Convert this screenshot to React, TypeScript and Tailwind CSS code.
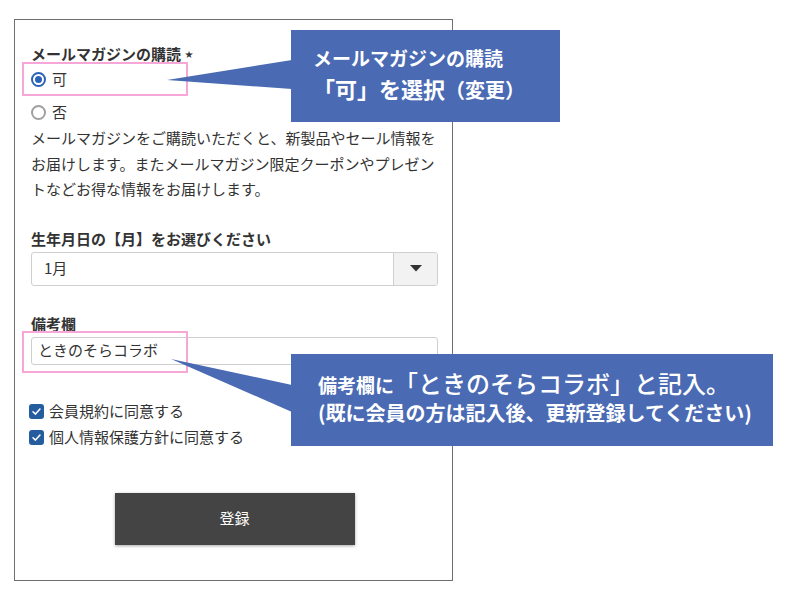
import React from "react";

const font = { fontFamily: '"Noto Sans CJK JP", "Noto Sans", sans-serif' };

function Radio({ checked, label }: { checked?: boolean; label: string }) {
  return (
    <div className="flex items-center h-[20px] gap-[6px]">
      {checked ? (
        <span className="w-[15px] h-[15px] rounded-full border-2 border-[#2a62b8] flex items-center justify-center">
          <span className="w-[7px] h-[7px] rounded-full bg-[#2a62b8]" />
        </span>
      ) : (
        <span className="w-[15px] h-[15px] rounded-full border-2 border-[#a0a0a0]" />
      )}
      <span>{label}</span>
    </div>
  );
}

function Check({ label }: { label: string }) {
  return (
    <div className="flex items-center h-[20px] gap-[5px] -ml-[2px]">
      <span className="w-[15px] h-[15px] rounded-[3px] bg-[#245c9e] flex items-center justify-center">
        <svg width="11" height="11" viewBox="0 0 12 12" fill="none">
          <path d="M2.2 6.3 L4.9 8.8 L9.8 3.3" stroke="#fff" strokeWidth="1.7" strokeLinecap="round" strokeLinejoin="round" />
        </svg>
      </span>
      <span>{label}</span>
    </div>
  );
}

export default function App() {
  return (
    <div className="relative w-[800px] h-[600px] bg-white overflow-hidden pt-[19px] pl-[14px] text-[#333]" style={font}>
      {/* form frame */}
      <div className="w-[439px] h-[562px] border border-[#6f6f6f] pt-[24px] pl-[16px] pr-[14px] text-[15px]">
        <div className="h-[20px] leading-[20px] font-bold flex items-center">
          メールマガジンの購読<span className="ml-[4px] text-[8px]">★</span>
        </div>
        <div className="mt-[5px]">
          <Radio checked label="可" />
        </div>
        <div className="mt-[13px]">
          <Radio label="否" />
        </div>
        <p className="mt-[3px] leading-[25.5px]">
          メールマガジンをご購読いただくと、新製品やセール情報をお届けします。またメールマガジン限定クーポンやプレゼントなどお得な情報をお届けします。
        </p>

        <div className="mt-[27px] h-[20px] leading-[20px] font-bold">生年月日の【月】をお選びください</div>
        <div className="mt-[3px] h-[34px] flex border border-[#cfcfcf] rounded-[3px] overflow-hidden">
          <div className="flex-1 flex items-center pl-[12px]">1月</div>
          <div className="w-[44px] bg-[#f2f2f2] border-l border-[#cfcfcf] flex items-center justify-center">
            <svg width="12" height="7" viewBox="0 0 12 7">
              <path d="M0 0 H12 L6 6.5 Z" fill="#333" />
            </svg>
          </div>
        </div>

        <div className="mt-[28px] h-[20px] leading-[20px] font-bold">備考欄</div>
        <div className="mt-[3px] h-[28px] flex items-center border border-[#cfcfcf] rounded-[3px] pl-[6px]">
          ときのそらコラボ
        </div>

        <div className="mt-[37px]">
          <Check label="会員規約に同意する" />
        </div>
        <div className="mt-[6px]">
          <Check label="個人情報保護方針に同意する" />
        </div>

        <div className="mt-[45px] flex justify-center">
          <button className="w-[240px] h-[52px] bg-[#444] text-white text-[15px] shadow-[0_1px_3px_rgba(0,0,0,0.35)]">
            登録
          </button>
        </div>
      </div>

      {/* annotation overlay */}
      <div className="absolute left-[22px] top-[62px] w-[166px] h-[34px] border-[2.5px] border-[#f6a7d8]" />
      <div className="absolute left-[22px] top-[331px] w-[166px] h-[42px] border-[2.5px] border-[#f6a7d8]" />

      <svg className="absolute left-0 top-0" width="800" height="600">
        <polygon points="167,80 292,60 292,89" fill="#4a6ab4" />
        <polygon points="171,359 292,385 292,412" fill="#4a6ab4" />
      </svg>

      <div className="absolute left-[291px] top-[30px] w-[269px] h-[92px] bg-[#4a6ab4] text-white font-bold pl-[22px] pt-[13px]">
        <div className="text-[19px] leading-[30px]">メールマガジンの購読</div>
        <div className="leading-[30px] flex items-baseline">
          <span className="text-[22px]">「可」を選択</span>
          <span className="text-[20px]">（変更）</span>
        </div>
      </div>

      <div className="absolute left-[291px] top-[354px] w-[482px] h-[92px] bg-[#4a6ab4] text-white pl-[27px] pt-[15px]">
        <div className="leading-[28px] flex items-baseline">
          <span className="text-[19px] font-bold">備考欄に</span>
          <span className="text-[24px] font-medium">「ときのそらコラボ」と記入。</span>
        </div>
        <div className="text-[20px] font-bold leading-[28px]">(既に会員の方は記入後、更新登録してください)</div>
      </div>
    </div>
  );
}
